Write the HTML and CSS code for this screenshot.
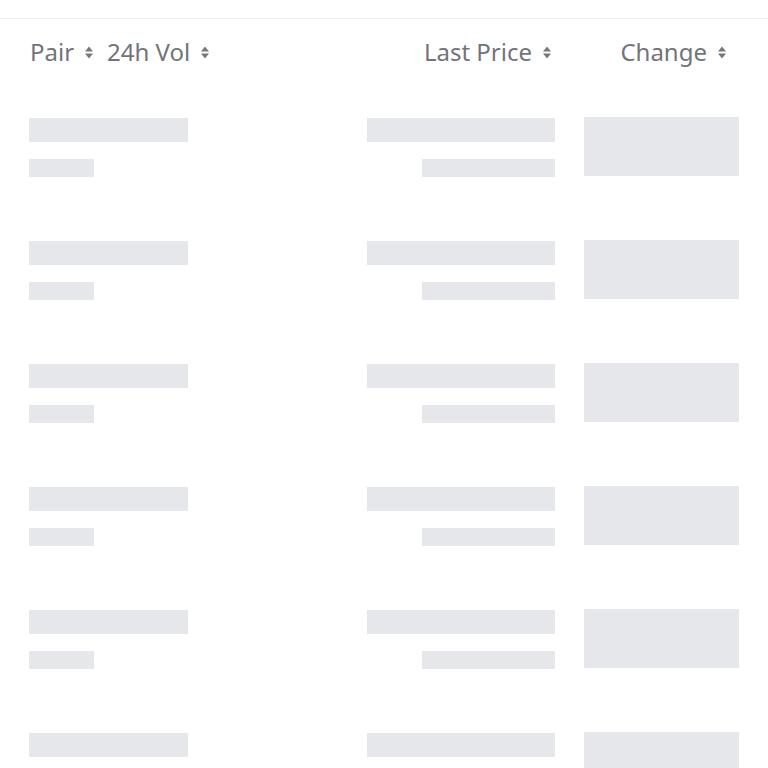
FILE: index.html
```html
<!DOCTYPE html>
<html lang="en">
<head>
<meta charset="utf-8">
<title>Markets</title>
<link rel="stylesheet" href="styles.css">
</head>
<body>
<div class="page">
<div class="topbar"></div>
<div class="header">
  <div class="hcell hleft">
    <span class="label">Pair</span>
    <svg class="sort" viewBox="0 0 8 12"><path d="M4 0L8 5H0Z"/><path d="M0 7H8L4 12Z"/></svg>
    <span class="label vol">24h Vol</span>
    <svg class="sort" viewBox="0 0 8 12"><path d="M4 0L8 5H0Z"/><path d="M0 7H8L4 12Z"/></svg>
  </div>
  <div class="hcell hprice">
    <span class="label">Last Price</span>
    <svg class="sort" viewBox="0 0 8 12"><path d="M4 0L8 5H0Z"/><path d="M0 7H8L4 12Z"/></svg>
  </div>
  <div class="hcell hchange">
    <span class="label">Change</span>
    <svg class="sort" viewBox="0 0 8 12"><path d="M4 0L8 5H0Z"/><path d="M0 7H8L4 12Z"/></svg>
  </div>
</div>
<div class="list">
  <div class="row"><div class="c1"><div class="sk a"></div><div class="sk b"></div></div><div class="c2"><div class="sk c"></div><div class="sk d"></div></div><div class="sk e"></div></div>
  <div class="row"><div class="c1"><div class="sk a"></div><div class="sk b"></div></div><div class="c2"><div class="sk c"></div><div class="sk d"></div></div><div class="sk e"></div></div>
  <div class="row"><div class="c1"><div class="sk a"></div><div class="sk b"></div></div><div class="c2"><div class="sk c"></div><div class="sk d"></div></div><div class="sk e"></div></div>
  <div class="row"><div class="c1"><div class="sk a"></div><div class="sk b"></div></div><div class="c2"><div class="sk c"></div><div class="sk d"></div></div><div class="sk e"></div></div>
  <div class="row"><div class="c1"><div class="sk a"></div><div class="sk b"></div></div><div class="c2"><div class="sk c"></div><div class="sk d"></div></div><div class="sk e"></div></div>
  <div class="row"><div class="c1"><div class="sk a"></div><div class="sk b"></div></div><div class="c2"><div class="sk c"></div><div class="sk d"></div></div><div class="sk e"></div></div>
</div>
</div>
</body>
</html>
```
FILE: styles.css
```css
html, body {
  margin: 0;
  padding: 0;
  background: #ffffff;
}
body {
  font-family: "Noto Sans", "Open Sans", sans-serif;
  color: #72747a;
}
.page {
  height: 768px;
  overflow: hidden;
}
.topbar {
  height: 18px;
  border-bottom: 1px solid #ececee;
}
.header {
  display: grid;
  grid-template-columns: 1fr 188px 155px;
  column-gap: 29px;
  padding: 17px 29px 0 29px;
  height: 86px;
  box-sizing: border-box;
}
.hcell {
  display: flex;
  align-items: center;
  height: 32px;
}
.hleft { padding-left: 1px; }
.hprice { justify-content: flex-end; padding-right: 4px; }
.hchange { justify-content: flex-end; padding-right: 13px; }
.label {
  font-size: 24px;
  line-height: 32px;
  letter-spacing: 0;
}
.sort {
  width: 8px;
  height: 13px;
  fill: #76787e;
  margin-left: 11px;
  margin-top: 1px;
}
.vol { margin-left: 14px; }
.list { display: flex; flex-direction: column; }
.row {
  display: grid;
  grid-template-columns: 1fr 188px 155px;
  column-gap: 29px;
  padding: 12px 29px 0 29px;
  height: 123px;
  box-sizing: border-box;
}
.sk { background: #e6e7ea; }
.c1, .c2 {
  display: flex;
  flex-direction: column;
  gap: 17px;
  padding-top: 1px;
}
.c2 { align-items: flex-end; }
.a { width: 159px; height: 24px; }
.b { width: 65px; height: 18px; }
.c { width: 188px; height: 24px; }
.d { width: 133px; height: 18px; }
.e { width: 155px; height: 59px; }
```
